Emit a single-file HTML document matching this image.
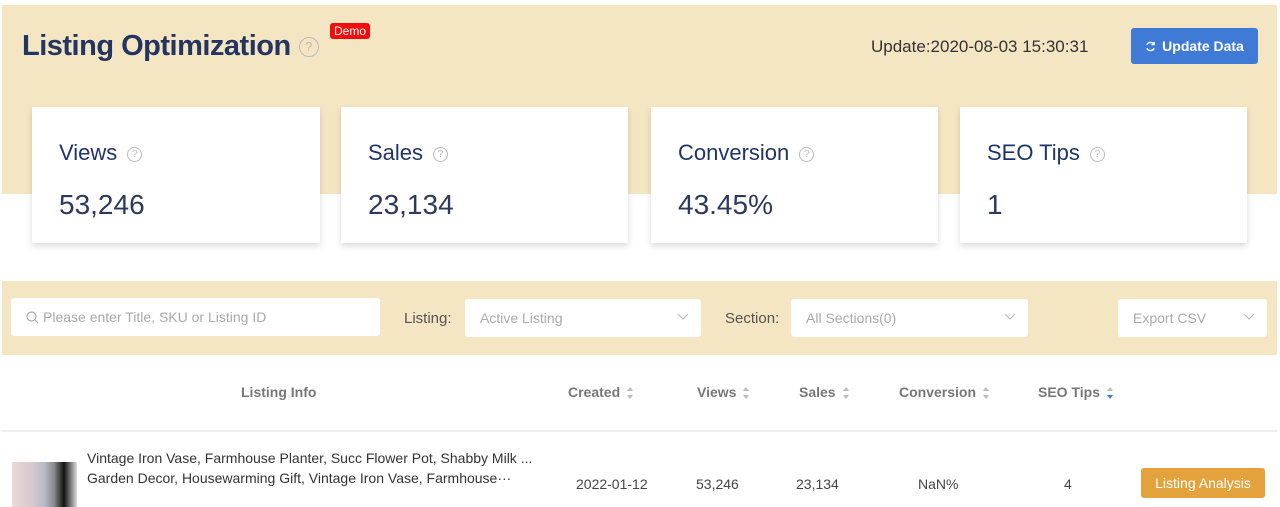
<!DOCTYPE html>
<html><head><meta charset="utf-8"><style>
*{box-sizing:border-box;margin:0;padding:0}
body{width:1280px;height:507px;overflow:hidden;background:#fff;font-family:"Liberation Sans",sans-serif;position:relative;color:#2b3a5c}
.a{position:absolute}
.band{left:2px;top:5px;width:1275px;height:189px;background:#f4e6c3}
.band2{left:2px;top:281px;width:1275px;height:74px;background:#f4e6c3}
.card{background:#fff;box-shadow:0 3px 6px rgba(0,0,0,.15);top:107px;height:136px}
.card .l{position:absolute;left:27px;top:33px;font-size:22px;color:#1f3468}
.card .v{position:absolute;left:27px;top:82px;font-size:28px;color:#2b3a5c}
.q{display:inline-block;width:15px;height:15px;border:1px solid #bbb;border-radius:50%;font-size:10px;color:#bbb;text-align:center;line-height:13px;vertical-align:middle;margin-left:10px}
.inp{background:#fff;border-radius:3px;height:38px;font-size:14px;color:#aaa;line-height:38px;padding-left:15px}
.chev{position:absolute;right:12px;top:14px}
.th{top:384px;font-size:14px;font-weight:bold;color:#777}
.sort{display:inline-block;vertical-align:middle;margin-left:6px}
.td{top:476px;font-size:14px;color:#444}
</style></head><body>
<div class="a band"></div>
<div class="a" style="left:22px;top:30px;font-size:29px;font-weight:bold;color:#243561;letter-spacing:-0.5px">Listing Optimization<span class="q" style="width:20px;height:20px;line-height:18px;font-size:13px;font-weight:normal;margin-left:8px;letter-spacing:0">?</span></div>
<div class="a" style="left:330px;top:23px;background:#f40c0c;color:#fff;font-size:12px;padding:1px 4px;border-radius:3px">Demo</div>
<div class="a" style="left:871px;top:37px;font-size:17px;color:#333">Update:2020-08-03 15:30:31</div>
<div class="a" style="left:1131px;top:28px;width:127px;height:36px;background:#3f7bd6;border-radius:3px;color:#fff;font-size:14px;font-weight:bold;line-height:36px;text-align:center"><svg width="11" height="11" viewBox="0 0 12 12" style="vertical-align:-1px;margin-right:6px"><path d="M10 4A4.5 4.5 0 0 0 2 4M2 8a4.5 4.5 0 0 0 8 0" fill="none" stroke="#fff" stroke-width="1.6"/><path d="M10 1v3H7" fill="none" stroke="#fff" stroke-width="1.4"/></svg>Update Data</div>
<div class="a card" style="left:32px;width:288px"><div class="l">Views<span class="q">?</span></div><div class="v">53,246</div></div>
<div class="a card" style="left:341px;width:287px"><div class="l">Sales<span class="q">?</span></div><div class="v">23,134</div></div>
<div class="a card" style="left:651px;width:287px"><div class="l">Conversion<span class="q">?</span></div><div class="v">43.45%</div></div>
<div class="a card" style="left:960px;width:287px"><div class="l">SEO Tips<span class="q">?</span></div><div class="v">1</div></div>
<div class="a band2"></div>
<div class="a inp" style="left:11px;top:298px;width:369px"><svg width="13" height="13" viewBox="0 0 13 13" style="vertical-align:-2px;margin-right:4px"><circle cx="5.5" cy="5.5" r="4.5" fill="none" stroke="#aaa" stroke-width="1.2"/><path d="M9 9l3 3" stroke="#aaa" stroke-width="1.2"/></svg>Please enter Title, SKU or Listing ID</div>
<div class="a" style="left:404px;top:310px;font-size:15px;color:#555">Listing:</div>
<div class="a inp" style="left:465px;top:299px;width:236px">Active Listing<svg class="chev" width="12" height="7" viewBox="0 0 12 7"><path d="M1 1l5 5 5-5" fill="none" stroke="#bbb" stroke-width="1.2"/></svg></div>
<div class="a" style="left:725px;top:310px;font-size:15px;color:#555">Section:</div>
<div class="a inp" style="left:791px;top:299px;width:237px">All Sections(0)<svg class="chev" width="12" height="7" viewBox="0 0 12 7"><path d="M1 1l5 5 5-5" fill="none" stroke="#bbb" stroke-width="1.2"/></svg></div>
<div class="a inp" style="left:1118px;top:299px;width:149px">Export CSV<svg class="chev" width="12" height="7" viewBox="0 0 12 7"><path d="M1 1l5 5 5-5" fill="none" stroke="#bbb" stroke-width="1.2"/></svg></div>
<div class="a th" style="left:241px">Listing Info</div>
<div class="a th" style="left:568px">Created<svg class="sort" width="8" height="14" viewBox="0 0 8 14"><path d="M4 1L7 5H1z" fill="#bbb"/><path d="M4 13L7 9H1z" fill="#bbb"/></svg></div>
<div class="a th" style="left:697px">Views<svg class="sort" width="8" height="14" viewBox="0 0 8 14"><path d="M4 1L7 5H1z" fill="#bbb"/><path d="M4 13L7 9H1z" fill="#bbb"/></svg></div>
<div class="a th" style="left:799px">Sales<svg class="sort" width="8" height="14" viewBox="0 0 8 14"><path d="M4 1L7 5H1z" fill="#bbb"/><path d="M4 13L7 9H1z" fill="#bbb"/></svg></div>
<div class="a th" style="left:899px">Conversion<svg class="sort" width="8" height="14" viewBox="0 0 8 14"><path d="M4 1L7 5H1z" fill="#bbb"/><path d="M4 13L7 9H1z" fill="#bbb"/></svg></div>
<div class="a th" style="left:1038px">SEO Tips<svg class="sort" width="8" height="14" viewBox="0 0 8 14"><path d="M4 1L7 5H1z" fill="#bbb"/><path d="M4 13L7 9H1z" fill="#3f7bd6"/></svg></div>
<div class="a" style="left:2px;top:430px;width:1275px;height:2px;background:#eee"></div>
<div class="a" style="left:12px;top:462px;width:65px;height:45px;background:linear-gradient(90deg,#e9d9d9,#d8c9cc 30%,#b8bcc8 50%,#888 65%,#111 80%,#ddd)"></div>
<div class="a" style="left:87px;top:448px;font-size:14px;color:#333;line-height:20px">Vintage Iron Vase, Farmhouse Planter, Succ Flower Pot, Shabby Milk ...<br>Garden Decor, Housewarming Gift, Vintage Iron Vase, Farmhouse···</div>
<div class="a td" style="left:576px">2022-01-12</div>
<div class="a td" style="left:696px">53,246</div>
<div class="a td" style="left:796px">23,134</div>
<div class="a td" style="left:918px">NaN%</div>
<div class="a td" style="left:1064px">4</div>
<div class="a" style="left:1141px;top:468px;width:124px;height:30px;background:#e3a23b;border-radius:3px;color:#fff;font-size:14px;line-height:30px;text-align:center">Listing Analysis</div>
</body></html>
